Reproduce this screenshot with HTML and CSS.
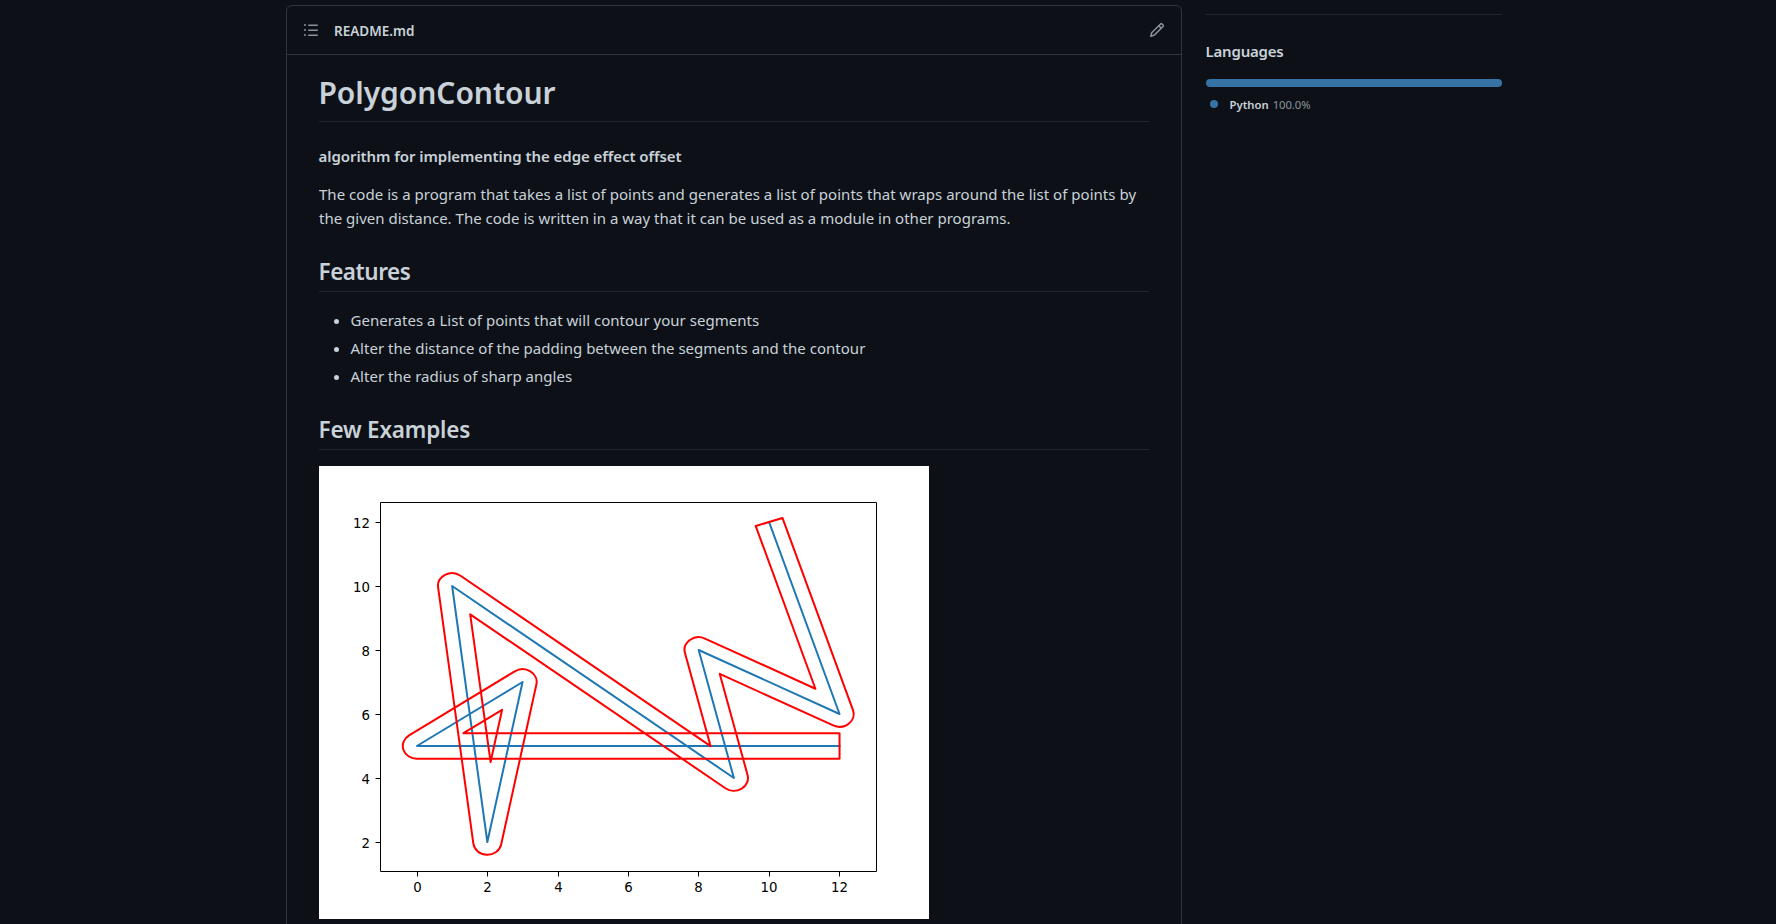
FILE: index.html
```html
<!DOCTYPE html>
<html lang="en">
<head>
<meta charset="utf-8">
<title>PolygonContour</title>
<link rel="stylesheet" href="styles.css">
</head>
<body>
<div class="layout">
  <main class="readme">
    <header class="readme-header">
      <svg class="icon" width="16" height="16" viewBox="0 0 16 16"><path fill-rule="evenodd" d="M2 4a1 1 0 100-2 1 1 0 000 2zm3.75-1.5a.75.75 0 000 1.5h8.5a.75.75 0 000-1.5h-8.5zm0 5a.75.75 0 000 1.5h8.5a.75.75 0 000-1.5h-8.5zm0 5a.75.75 0 000 1.5h8.5a.75.75 0 000-1.5h-8.5zM3 8a1 1 0 11-2 0 1 1 0 012 0zm-1 6a1 1 0 100-2 1 1 0 000 2z"/></svg>
      <h2 class="filename">README.md</h2>
      <svg class="icon edit" width="16" height="16" viewBox="0 0 16 16"><path fill-rule="evenodd" d="M11.013 1.427a1.75 1.75 0 012.474 0l1.086 1.086a1.75 1.75 0 010 2.474l-8.61 8.61c-.21.21-.47.364-.756.445l-3.251.93a.75.75 0 01-.927-.928l.929-3.25a1.75 1.75 0 01.445-.758l8.61-8.61zm1.414 1.06a.25.25 0 00-.354 0L10.811 3.75l1.439 1.44 1.263-1.263a.25.25 0 000-.354l-1.086-1.086zM11.189 6.25L9.75 4.81l-6.286 6.287a.25.25 0 00-.064.108l-.558 1.953 1.953-.558a.249.249 0 00.108-.064l6.286-6.286z"/></svg>
    </header>
    <article class="markdown">
      <h1>PolygonContour</h1>
      <h4>algorithm for implementing the edge effect offset</h4>
      <p>The code is a program that takes a list of points and generates a list of points that wraps around the list of points by<br><span class="line-two">the given distance. The code is written in a way that it can be used as a module in other programs.</span></p>
      <h2>Features</h2>
      <ul>
        <li>Generates a List of points that will contour your segments</li>
        <li>Alter the distance of the padding between the segments and the contour</li>
        <li>Alter the radius of sharp angles</li>
      </ul>
      <h2 class="examples">Few Examples</h2>
      <svg class="plot" width="610" height="453" viewBox="0 0 610 453">
        <rect width="610" height="453" fill="#fff"/>
        <g transform="matrix(35.22 0 0 -32 97.9 440)">
          <path class="segments" d="M10 12L12 6L8 8L9 4L1 10L2 2L3 7L0 5L12 5"/>
          <path class="contour" d="M10.3795 12.1265L12.3795 6.1265A.4 .4 0 0 0 11.8211 5.6422L8.599 7.253L9.3881 4.097A.4 .4 0 0 0 8.76 3.68L1.5138 9.1146L2.092 4.5L2.4186 6.1314L1.3216 5.4L12 5.4L12 4.6L0 4.6A.4 .4 0 0 0 -.2219 5.3328L2.7781 7.3328A.4 .4 0 0 0 3.3922 6.9216L2.3922 1.9216A.4 .4 0 0 0 1.6031 1.9504L.6031 9.9504A.4 .4 0 0 0 1.24 10.32L8.3385 4.996L7.6119 7.903A.4 .4 0 0 0 8.1789 8.3578L11.315 6.79L9.6205 11.8735Z"/>
        </g>
        <path class="axes" d="M61.5 36.5H557.5V405.5H61.5ZM56.5 56.5h5M56.5 120.5h5M56.5 184.5h5M56.5 248.5h5M56.5 312.5h5M56.5 376.5h5M98.5 405.5v5M168.5 405.5v5M239.5 405.5v5M309.5 405.5v5M379.5 405.5v5M450.5 405.5v5M520.5 405.5v5"/>
        <g class="ticks ticks-y">
          <text x="51" y="62">12</text><text x="51" y="126">10</text><text x="51" y="190">8</text><text x="51" y="254">6</text><text x="51" y="318">4</text><text x="51" y="382">2</text>
        </g>
        <g class="ticks ticks-x">
          <text x="98.5" y="426">0</text><text x="168.5" y="426">2</text><text x="239.5" y="426">4</text><text x="309.5" y="426">6</text><text x="379.5" y="426">8</text><text x="450" y="426">10</text><text x="520.5" y="426">12</text>
        </g>
      </svg>
    </article>
  </main>
  <aside class="sidebar">
    <h2>Languages</h2>
    <div class="bar"></div>
    <div class="language"><span class="dot"></span><strong>Python</strong><span class="share">100.0%</span></div>
  </aside>
</div>
</body>
</html>
```
FILE: styles.css
```css
* { box-sizing: border-box; }
body {
  margin: 0;
  height: 924px;
  overflow: hidden;
  background: #0d1117;
  color: #c9d1d9;
  font-family: "Noto Sans", "Open Sans", sans-serif;
  font-size: 15px;
  line-height: 24px;
}
h1, h2, h4, p, ul { margin: 0; font-weight: 400; }
.layout { display: flex; gap: 24px; padding: 5px 0 0 286px; }
.readme {
  width: 896px;
  height: 960px;
  flex: none;
  border: 1px solid #30363d;
  border-radius: 6px;
}
.readme-header {
  display: flex;
  align-items: center;
  height: 49px;
  padding: 0 16px;
  border-bottom: 1px solid #30363d;
}
.icon { fill: #8b949e; flex: none; }
.edit { margin-left: auto; }
.readme-header .filename { margin-left: 15px; padding-top: 1px; font-size: 13.5px; font-weight: 600; }
.markdown { padding: 17px 32px 0; }
.markdown h1 {
  height: 50px;
  border-bottom: 1px solid #21262d;
  font-size: 30px;
  font-weight: 600;
  line-height: 42px;
  letter-spacing: -0.06px;
  text-indent: -0.6px;
}
.markdown h4 { margin: 22px 0 14px; font-weight: 600; letter-spacing: -0.06px; text-indent: -0.5px; }
.markdown h2 {
  height: 38px;
  margin-top: 24px;
  border-bottom: 1px solid #21262d;
  font-size: 22.5px;
  font-weight: 600;
  line-height: 35px;
  letter-spacing: -0.45px;
  text-indent: -0.5px;
}
.markdown .examples { letter-spacing: -0.2px; }
.markdown p { white-space: nowrap; letter-spacing: 0.033px; }
.line-two { letter-spacing: 0.01px; }
.markdown ul { margin-top: 16px; padding-left: 31.5px; letter-spacing: 0.02px; }
.markdown li + li { margin-top: 4px; }
.plot { display: block; margin-top: 16px; }
.segments, .contour {
  fill: none;
  stroke-width: 2;
  stroke-linejoin: round;
  vector-effect: non-scaling-stroke;
}
.segments { stroke: #1f77b4; stroke-linecap: square; }
.contour { stroke: #f00; }
.axes { fill: none; stroke: #000; stroke-width: 1; }
.ticks { font: 13.3px "DejaVu Sans", sans-serif; fill: #000; }
.ticks-y { text-anchor: end; }
.ticks-x { text-anchor: middle; }
.sidebar { width: 296px; margin-top: 9px; border-top: 1px solid #21262d; padding-top: 24px; }
.sidebar h2 { font-size: 15px; font-weight: 600; line-height: 24px; letter-spacing: -0.2px; text-indent: -0.5px; }
.bar { height: 8px; margin-top: 16px; border-radius: 6px; background: #3572a5; }
.language { display: flex; align-items: center; margin-top: 8px; padding-left: 4px; font-size: 11.3px; line-height: 18px; }
.language strong, .share { padding-top: 1px; }
.dot { width: 8px; height: 8px; margin: -1px 11.5px 0 0; border-radius: 50%; background: #3572a5; }
.language strong { margin-right: 4px; font-weight: 600; }
.share { color: #8b949e; letter-spacing: -0.05px; }
```
